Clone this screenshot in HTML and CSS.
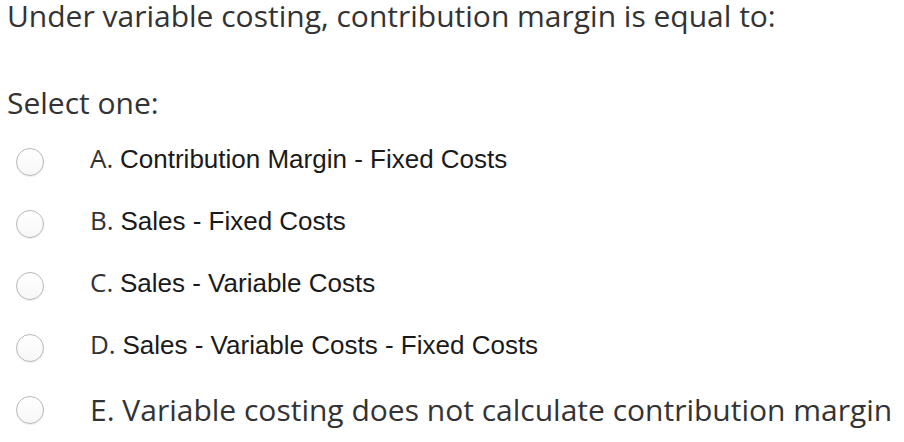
FILE: index.html
```html
<!DOCTYPE html>
<html lang="en">
<head>
<meta charset="utf-8">
<title>Question</title>
<link rel="stylesheet" href="styles.css">
</head>
<body>
<div class="question">
  <div class="qtext">Under variable costing, contribution margin is equal to:</div>
  <div class="prompt">Select one:</div>
  <div class="answers">
    <label class="answer"><span class="radio"></span><span class="label"><span class="letter">A. </span><span class="body">Contribution Margin - Fixed Costs</span></span></label>
    <label class="answer"><span class="radio"></span><span class="label"><span class="letter">B. </span><span class="body">Sales - Fixed Costs</span></span></label>
    <label class="answer"><span class="radio"></span><span class="label"><span class="letter">C. </span><span class="body">Sales - Variable Costs</span></span></label>
    <label class="answer"><span class="radio"></span><span class="label"><span class="letter">D. </span><span class="body">Sales - Variable Costs - Fixed Costs</span></span></label>
    <label class="answer"><span class="radio"></span><span class="label plain"><span class="letter">E. </span>Variable costing does not calculate contribution margin</span></label>
  </div>
</div>
</body>
</html>
```

FILE: styles.css
```css
html, body {
  margin: 0;
  padding: 0;
  background: #ffffff;
}
body {
  font-family: "Open Sans", "DejaVu Sans", sans-serif;
  color: #333333;
}
.question {
  padding: 0 0 0 7px;
}
.qtext {
  font-size: 30px;
  line-height: 32px;
}
.prompt {
  font-size: 30px;
  line-height: 40px;
  margin-top: 51px;
}
.answers {
  display: flex;
  flex-direction: column;
  margin-top: 8px;
  margin-left: -7px;
}
.answer {
  display: flex;
  align-items: center;
  height: 62px;
}
.radio {
  flex: none;
  width: 26px;
  height: 26px;
  margin-left: 16px;
  border: 1px solid #b8b8b8;
  border-radius: 50%;
  background: linear-gradient(#ffffff, #f7f7f7);
  box-shadow: 0 1px 1px rgba(0,0,0,0.08);
}
.label {
  margin-left: 46px;
  margin-bottom: 8px;
  font-size: 26px;
  white-space: nowrap;
}
.letter {
  font-family: "Open Sans", sans-serif;
  color: #333333;
}
.body {
  font-family: "Liberation Sans", Arial, sans-serif;
  color: #1a1a1a;
}
.label.plain {
  font-size: 30px;
  margin-bottom: 2px;
}
```
